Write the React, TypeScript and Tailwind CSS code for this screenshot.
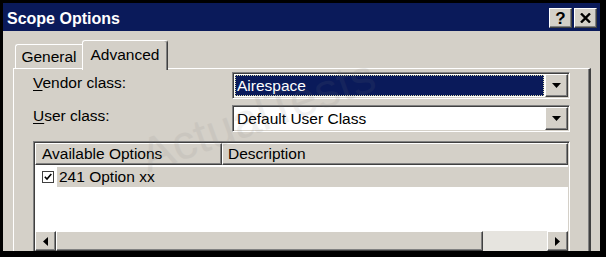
import React from "react";

// Win classic 3D edges
const raised =
    "border border-t-white border-l-white border-r-[#404040] border-b-[#404040] shadow-[inset_-1px_-1px_#808080]";
const sunken =
    "border border-t-[#808080] border-l-[#808080] border-r-white border-b-white shadow-[inset_1px_1px_#404040,inset_-1px_-1px_#d4d0c8]";

const DownArrow: React.FC = () => (
    <svg width="9" height="5" viewBox="0 0 9 5">
        <path d="M0 0h9L4.5 5z" fill="#000" />
    </svg>
);

const ComboBox: React.FC<{ value: string; focused?: boolean }> = ({ value, focused }) => (
    <div className={`flex h-[27px] w-[338px] bg-white ${sunken}`}>
        <div className="flex flex-1 p-[2px] pr-[1px]">
            {focused ? (
                <div className="flex flex-1 items-center border border-dotted border-[#d8d8a8] bg-[#0a1a5a] pl-[1px] text-white">
                    {value}
                </div>
            ) : (
                <div className="flex flex-1 items-center pl-[2px] text-black">{value}</div>
            )}
        </div>
        <div className={`my-[1px] mr-[1px] flex w-[23px] items-center justify-center bg-[#d4d0c8] ${raised}`}>
            <DownArrow />
        </div>
    </div>
);

const App: React.FC = () => {
    return (
        <div
            className="relative h-[257px] w-[606px] overflow-hidden bg-black pl-[3px] pt-[3px] text-[15.5px] leading-none"
            style={{ fontFamily: '"Liberation Sans", Arial, sans-serif' }}
        >
            <div className="flex h-[248px] w-[597px] flex-col overflow-hidden bg-[#d4d0c8]">
                {/* Title bar */}
                <div className="flex h-[28px] shrink-0 items-center bg-[#0a1a5a] pl-[4px] pr-[3px]">
                    <span className="flex-1 pt-[3px] text-[16px] font-bold text-white">Scope Options</span>
                    <div className="mt-[2px] flex gap-[2px]">
                        <div className={`flex h-[20px] w-[23px] items-center justify-center bg-[#d4d0c8] text-[17px] font-bold text-black ${raised}`}>
                            ?
                        </div>
                        <div className={`flex h-[20px] w-[23px] items-center justify-center bg-[#d4d0c8] ${raised}`}>
                            <svg width="11" height="10" viewBox="0 0 11 10">
                                <path d="M1 0.5l9 9M10 0.5l-9 9" stroke="#000" strokeWidth="2.4" />
                            </svg>
                        </div>
                    </div>
                </div>

                {/* Tabs */}
                <div className="ml-[10px] mt-[9px] flex h-[28px] shrink-0 items-end pl-[2px]">
                    <div className="flex h-[24px] w-[67px] items-center justify-center rounded-tl-[3px] border-l border-t border-l-white border-t-white text-black">
                        General
                    </div>
                    <div className="relative z-10 -mb-[2px] flex h-[30px] w-[86px] items-center justify-center rounded-t-[3px] border-l border-r border-t border-l-white border-r-[#404040] border-t-white bg-[#d4d0c8] pb-[2px] text-black shadow-[inset_-1px_0_#808080]">
                        Advanced
                    </div>
                </div>

                {/* Tab panel */}
                <div className="ml-[10px] flex w-[578px] flex-1 flex-col border-l border-r-2 border-t border-l-white border-r-[#404040] border-t-white pl-[19px] pr-[18px] pt-[3px] shadow-[inset_-1px_0_#808080]">
                    <div className="flex items-center">
                        <span className="w-[199px] pb-[6px] text-black">
                            <span className="underline underline-offset-2">V</span>endor class:
                        </span>
                        <ComboBox value="Airespace" focused />
                    </div>
                    <div className="mt-[6px] flex items-center">
                        <span className="w-[199px] pb-[6px] text-black">
                            <span className="underline underline-offset-2">U</span>ser class:
                        </span>
                        <ComboBox value="Default User Class" />
                    </div>

                    {/* List view */}
                    <div className={`mt-[9px] flex h-[111px] w-[537px] shrink-0 flex-col bg-white p-[1px] pb-0 ${sunken}`}>
                        <div className="flex h-[22px] shrink-0 bg-[#d4d0c8]">
                            <div className={`flex w-[187px] items-center pl-[6px] text-black ${raised}`}>Available Options</div>
                            <div className={`flex flex-1 items-center pl-[5px] text-black ${raised}`}>Description</div>
                        </div>
                        <div className="flex-1 pt-[2px]">
                            <div className="flex h-[20px] items-center">
                                <div className="ml-[7px] mr-[3px] flex h-[12px] w-[12px] items-center justify-center border border-[#404040] bg-white">
                                    <svg width="8" height="8" viewBox="0 0 8 8">
                                        <path d="M0.8 3.8l2.2 2.3 4.3-5" stroke="#000" strokeWidth="1.6" fill="none" />
                                    </svg>
                                </div>
                                <div className="flex h-full flex-1 items-center bg-[#d4d0c8] pl-[2px] text-black">241 Option xx</div>
                            </div>
                        </div>
                        <div className="flex h-[20px] shrink-0 bg-[#d4d0c8]">
                            <div className={`flex w-[21px] items-center justify-center ${raised}`}>
                                <svg width="5" height="9" viewBox="0 0 5 9">
                                    <path d="M5 0v9L0 4.5z" fill="#000" />
                                </svg>
                            </div>
                            <div className={`w-[427px] ${raised}`} />
                            <div className="flex-1 bg-[#e6e4df]" />
                            <div className={`flex w-[21px] items-center justify-center ${raised}`}>
                                <svg width="5" height="9" viewBox="0 0 5 9">
                                    <path d="M0 0v9L5 4.5z" fill="#000" />
                                </svg>
                            </div>
                        </div>
                    </div>
                </div>
            </div>

            {/* Watermark */}
            <div className="pointer-events-none absolute left-[135px] top-[92px] -rotate-[20deg] select-none text-[48px] text-[#7a7a7a] opacity-[0.1]">
                ActualTests
            </div>
        </div>
    );
};

export default App;
